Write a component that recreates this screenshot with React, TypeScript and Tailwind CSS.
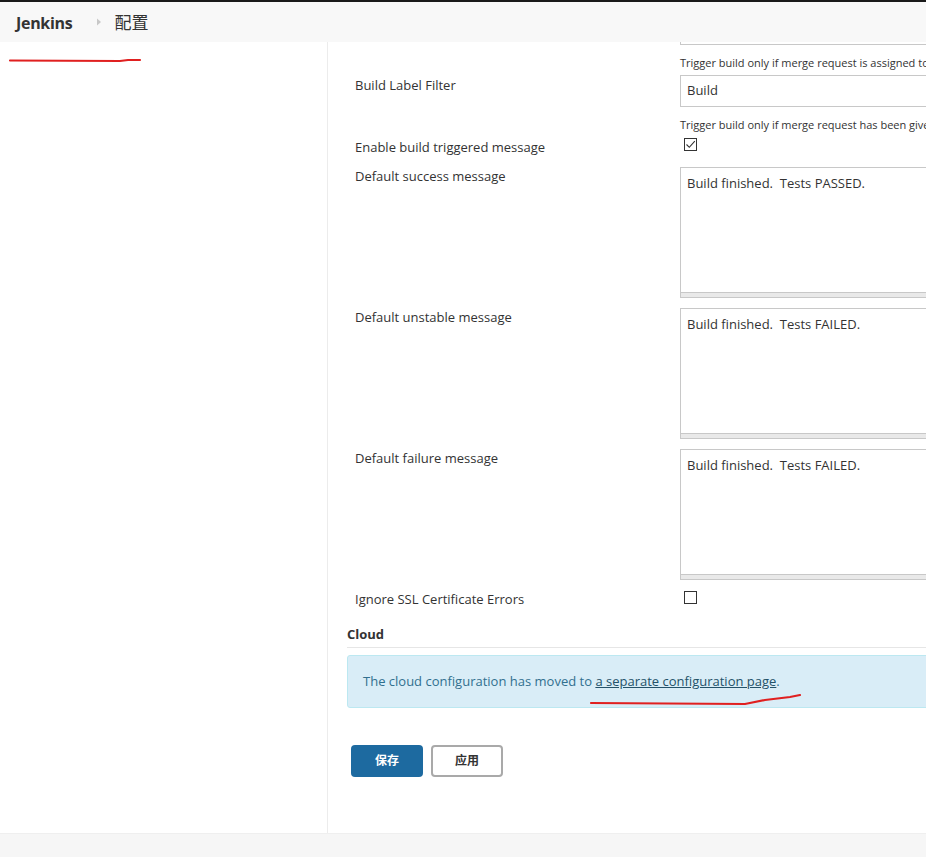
import React from "react";

const font = { fontFamily: '"Open Sans", "Noto Sans CJK SC", sans-serif' };

function Checkbox({ checked }: { checked?: boolean }) {
  return (
    <div className="w-[13px] h-[13px] border border-[#333] bg-white flex items-center justify-center">
      {checked && (
        <svg width="11" height="11" viewBox="0 0 11 11">
          <path d="M1.5 5.5 L4.3 8.3 L9.8 2.2" fill="none" stroke="#333" strokeWidth="1.1" />
        </svg>
      )}
    </div>
  );
}

function TextArea({ text }: { text: string }) {
  return (
    <div className="w-[300px] shrink-0">
      <div className="h-[126px] border border-[#c8c8c8] bg-white px-[6px] pt-[6px] text-[13px] leading-[18px] text-[#333] whitespace-pre">
        {text}
      </div>
      <div className="h-[5px] border border-t-0 border-[#c8c8c8] bg-[#e9e9e9]" />
    </div>
  );
}

export default function App() {
  return (
    <div className="relative w-[926px] h-[857px] overflow-hidden bg-white text-[#333]" style={font}>
      {/* header */}
      <div className="h-[42px] bg-[#f8f8f8] border-t-2 border-[#1a1a1a] flex items-center">
        <span className="ml-[16px] text-[16px] font-bold text-[#333] tracking-[-0.3px] mt-[2px]">Jenkins</span>
        <svg className="ml-[24px]" width="6" height="8" viewBox="0 0 6 8">
          <path d="M1 0.5 L5 4 L1 7.5 Z" fill="#c8c8c8" />
        </svg>
        <span className="ml-[12px] text-[17px] text-[#333] mt-[2px]">配置</span>
      </div>

      <div className="flex h-[791px]">
        {/* sidebar */}
        <div className="w-[328px] shrink-0 border-r border-[#ececec] bg-white" />

        {/* main */}
        <div className="flex-1 min-w-0 pl-[19px] relative">
          {/* top cut-off input */}
          <div className="ml-[333px] w-[300px] h-[3px] border border-t-0 border-[#c8c8c8]" />

          <div className="pl-[8px]">
            <div className="ml-[325px] mt-[10px] text-[11px] leading-[15px] whitespace-nowrap">
              Trigger build only if merge request is assigned to
            </div>
            <div className="flex items-start mt-[5px]">
              <div className="w-[325px] shrink-0 text-[13px] leading-[18px] pt-[1px]">Build Label Filter</div>
              <div className="w-[300px] shrink-0 h-[32px] border border-[#c8c8c8] flex items-center px-[6px] text-[13px]">Build</div>
            </div>
            <div className="ml-[325px] mt-[10px] text-[11px] leading-[15px] whitespace-nowrap">
              Trigger build only if merge request has been given
            </div>
            <div className="flex items-start mt-[6px] h-[18px]">
              <div className="w-[325px] shrink-0 text-[13px] leading-[18px]">Enable build triggered message</div>
              <div className="pl-[4px]"><Checkbox checked /></div>
            </div>

            <div className="flex mt-[11px]">
              <div className="w-[325px] shrink-0 text-[13px] leading-[18px]">Default success message</div>
              <TextArea text="Build finished.  Tests PASSED." />
            </div>
            <div className="flex mt-[10px]">
              <div className="w-[325px] shrink-0 text-[13px] leading-[18px]">Default unstable message</div>
              <TextArea text="Build finished.  Tests FAILED." />
            </div>
            <div className="flex mt-[10px]">
              <div className="w-[325px] shrink-0 text-[13px] leading-[18px]">Default failure message</div>
              <TextArea text="Build finished.  Tests FAILED." />
            </div>
            <div className="flex items-start mt-[10px] h-[18px]">
              <div className="w-[325px] shrink-0 text-[13px] leading-[18px]">Ignore SSL Certificate Errors</div>
              <div className="pl-[4px] pt-[1px]"><Checkbox /></div>
            </div>
          </div>

          <div className="mt-[17px] text-[13px] leading-[18px] font-bold pb-[4px] border-b border-[#e6e6e6] w-[700px]">Cloud</div>
          <div className="mt-[7px] w-[700px] h-[53px] bg-[#d9edf7] border border-[#bce8f1] rounded-[3px] flex items-center pl-[15px] text-[13px] text-[#31708f]">
            <span>
              The cloud configuration has moved to{" "}
              <span className="underline text-[#245269]">a separate configuration page</span>.
            </span>
          </div>

          <div className="flex gap-[8px] mt-[37px] ml-[4px]">
            <button className="w-[72px] h-[32px] rounded-[4px] bg-[#1d6aa0] text-white text-[12px] font-bold">保存</button>
            <button className="w-[72px] h-[32px] rounded-[4px] bg-white border-2 border-[#a9a9a9] text-[#333] text-[12px] font-bold">应用</button>
          </div>
        </div>
      </div>

      <div className="h-[24px] bg-[#f6f6f6] border-t border-[#efefef]" />

      {/* red annotations */}
      <svg className="absolute left-0 top-0 pointer-events-none" width="926" height="857">
        <path d="M10 60.5 L120 61 L128 60 L140 60" fill="none" stroke="#e02020" strokeWidth="2.2" strokeLinecap="round" />
        <path d="M591 703 L745 704 L765 700 L790 697 L800 695" fill="none" stroke="#e02020" strokeWidth="2.2" strokeLinecap="round" />
      </svg>
    </div>
  );
}
